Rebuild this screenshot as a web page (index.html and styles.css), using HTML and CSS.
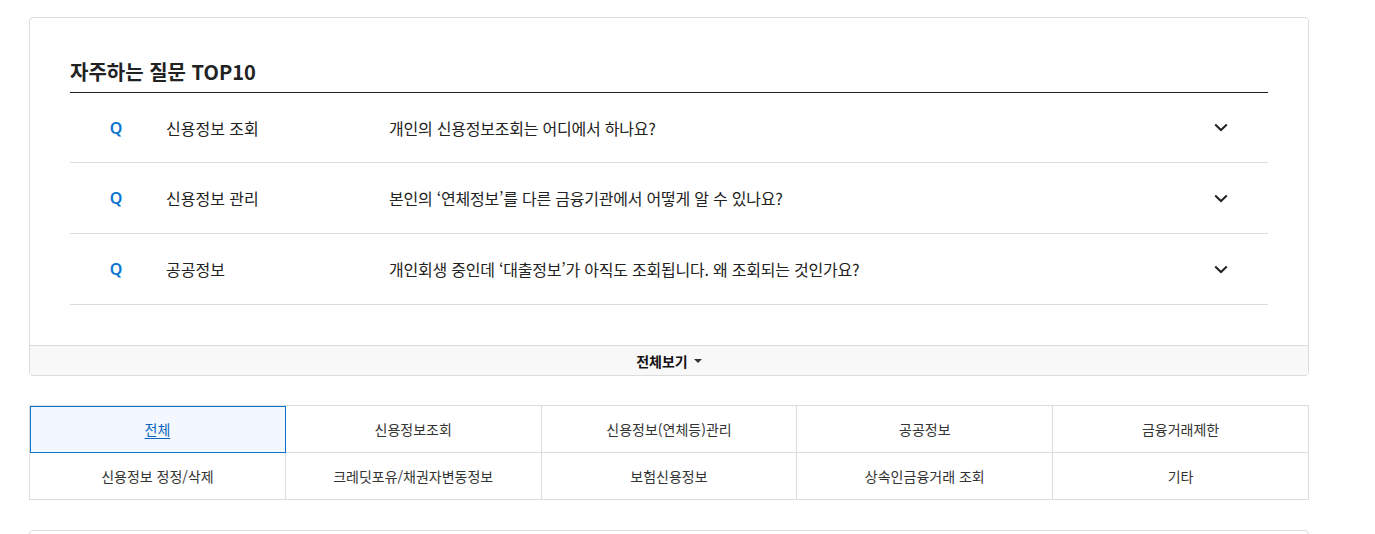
FILE: index.html
```html
<!DOCTYPE html>
<html lang="ko">
<head>
<meta charset="utf-8">
<title>자주하는 질문 TOP10</title>
<link rel="stylesheet" href="styles.css">
</head>
<body>
<div class="page">
  <section class="faq-card">
    <div class="faq-body">
      <h2 class="faq-title">자주하는 질문 TOP10</h2>
      <ul class="faq-list">
        <li class="faq-row">
          <span class="faq-q">Q</span>
          <span class="faq-cat">신용정보 조회</span>
          <span class="faq-text">개인의 신용정보조회는 어디에서 하나요?</span>
          <span class="faq-arrow"><svg width="14" height="9" viewBox="0 0 14 9"><path d="M1.2 1.5 L7 7 L12.8 1.5" fill="none" stroke="#222" stroke-width="2"/></svg></span>
        </li>
        <li class="faq-row">
          <span class="faq-q">Q</span>
          <span class="faq-cat">신용정보 관리</span>
          <span class="faq-text">본인의 ‘연체정보’를 다른 금융기관에서 어떻게 알 수 있나요?</span>
          <span class="faq-arrow"><svg width="14" height="9" viewBox="0 0 14 9"><path d="M1.2 1.5 L7 7 L12.8 1.5" fill="none" stroke="#222" stroke-width="2"/></svg></span>
        </li>
        <li class="faq-row">
          <span class="faq-q">Q</span>
          <span class="faq-cat">공공정보</span>
          <span class="faq-text">개인회생 중인데 ‘대출정보’가 아직도 조회됩니다. 왜 조회되는 것인가요?</span>
          <span class="faq-arrow"><svg width="14" height="9" viewBox="0 0 14 9"><path d="M1.2 1.5 L7 7 L12.8 1.5" fill="none" stroke="#222" stroke-width="2"/></svg></span>
        </li>
      </ul>
    </div>
    <div class="faq-more">전체보기 <span class="caret"></span></div>
  </section>

  <nav class="tabs">
    <a class="tab active">전체</a>
    <a class="tab">신용정보조회</a>
    <a class="tab">신용정보(연체등)관리</a>
    <a class="tab">공공정보</a>
    <a class="tab">금융거래제한</a>
    <a class="tab">신용정보 정정/삭제</a>
    <a class="tab">크레딧포유/채권자변동정보</a>
    <a class="tab">보험신용정보</a>
    <a class="tab">상속인금융거래 조회</a>
    <a class="tab">기타</a>
  </nav>

  <section class="next-card"></section>
</div>
</body>
</html>
```

FILE: styles.css
```css
* { box-sizing: border-box; }
html, body { margin: 0; padding: 0; background: #fff; }
body {
  font-family: "Noto Sans CJK KR", "Noto Sans", sans-serif;
  color: #222;
  overflow: hidden;
}
.page {
  width: 1280px;
  margin-left: 29px;
  padding-top: 17px;
}
.faq-card {
  border: 1px solid #dcdcdc;
  border-radius: 4px;
  overflow: hidden;
}
.faq-body {
  padding: 40px 40px 40px;
}
.faq-title {
  margin: 0;
  font-size: 20px;
  font-weight: 700;
  line-height: 28px;
  padding-bottom: 6px;
  border-bottom: 1px solid #222;
  color: #222;
}
.faq-list {
  list-style: none;
  margin: 0;
  padding: 0;
}
.faq-row {
  display: grid;
  grid-template-columns: 96px 223px 1fr 94px;
  align-items: center;
  height: 71px;
  border-bottom: 1px solid #dcdcdc;
  font-size: 16px;
  color: #222;
}
.faq-row:first-child {
  height: 70px;
}
.faq-text {
  letter-spacing: -0.22px;
}
.faq-q {
  text-align: center;
  padding-right: 4px;
  font-weight: 600;
  color: #0a74d0;
  font-family: "Noto Sans", sans-serif;
  font-size: 16px;
}
.faq-arrow {
  display: flex;
  justify-content: center;
}
.faq-more {
  height: 30px;
  border-top: 1px solid #dcdcdc;
  background: #f8f8f8;
  display: flex;
  align-items: center;
  justify-content: center;
  font-size: 14px;
  font-weight: 700;
  color: #111;
  gap: 6px;
  padding-left: 0;
}
.caret {
  width: 0;
  height: 0;
  border-left: 4px solid transparent;
  border-right: 4px solid transparent;
  border-top: 4px solid #333;
  margin-top: 1px;
}
.tabs {
  margin-top: 29px;
  display: grid;
  grid-template-columns: repeat(5, 1fr);
  border-top: 1px solid #dcdcdc;
  border-left: 1px solid #dcdcdc;
}
.tab {
  height: 47px;
  display: flex;
  align-items: center;
  justify-content: center;
  border-right: 1px solid #dcdcdc;
  border-bottom: 1px solid #dcdcdc;
  font-size: 14px;
  color: #333;
  text-decoration: none;
}
.tab.active {
  background: #f3f8fe;
  outline: 1px solid #0a74d0;
  outline-offset: -1px;
  color: #0a64c0;
  text-decoration: underline;
  text-underline-offset: 3px;
}
.next-card {
  margin-top: 30px;
  height: 40px;
  border: 1px solid #dcdcdc;
  border-radius: 4px;
}
```
